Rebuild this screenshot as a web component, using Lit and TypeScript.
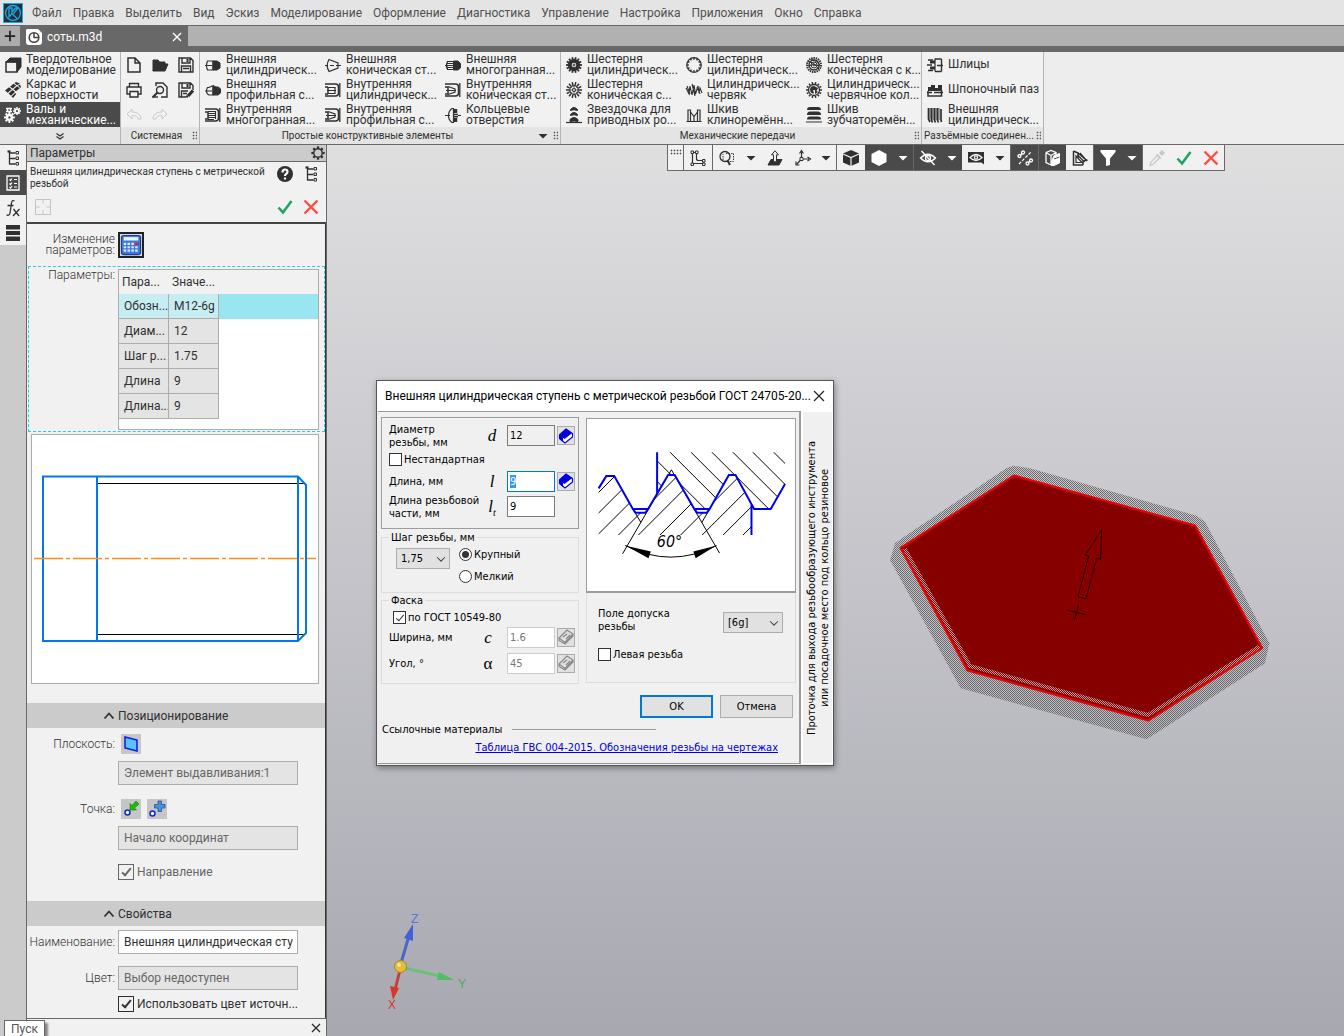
import { LitElement, html, css, svg, nothing, type TemplateResult } from "lit";
import { customElement } from "lit/decorators.js";
import { classMap } from "lit/directives/class-map.js";

const base = css`
  *,
  *::before,
  *::after {
    box-sizing: border-box;
  }
  :host {
    --ink: #303030;
    --dark: #4a4a4a;
    --line: #686868;
    --soft: #f1f1f1;
    --bar: #e4e4e4;
    --mid: #cbcbcb;
    font-family: Roboto, "Noto Sans", sans-serif;
    font-size: 12px;
    color: var(--ink);
  }
  button,
  input,
  select {
    font: inherit;
    color: inherit;
    margin: 0;
    padding: 0;
    border: 0;
    border-radius: 0;
    background: none;
  }
  svg {
    display: block;
    flex: none;
  }
`;

/* Line icons on a 16 × 16 grid; "currentColor" follows the button that holds them. */
const teeth = (r1: number, r2: number, n: number, w: number) =>
  Array.from({ length: n }, (_, i) => {
    const a = (i * 2 * Math.PI) / n;
    return svg`<path stroke-width=${w} d="M${8 + r1 * Math.cos(a)} ${8 + r1 * Math.sin(a)}L${8 + r2 * Math.cos(a)} ${8 + r2 * Math.sin(a)}"/>`;
  });

const bore = svg`<path stroke-width="1.500" d="M0 2h10.500q3 0 3 3v6q0 3-3 3H0M3 5v7M3 5H0M3 12H0"/><path stroke-width="1.300" d="M14.800 1v14"/>`;

const glyphs: Record<string, TemplateResult> = {
  solid: svg`<path fill="currentColor" d="M5 1h11v9l-4 5V5H1z"/><rect x="1" y="5" width="11" height="10" fill="none" stroke-width="1.500"/>`,
  frame: svg`<path fill="currentColor" stroke="none" d="M0 8.500l4-3.200 2.700 2-4 3.400zM5 4.700l3.500-3 2.700 1.900-3.500 3zM9.500 1L11 0l4 1.500-3 1.800zM3.500 11.500l4-3.500 2.500 2-4 3.700zM8.500 7.300l3.600-3 2.600 2L11 9.200zM13 3.800l2-1.300 1 2.500-.7 1zM6.500 14.500l3.700-3.500 1 1L8 16z"/>`,
  shafts: svg`<g transform="translate(-1 5) scale(.68)"><circle cx="8" cy="8" r="3.500" stroke-width="3.500"/>${teeth(5, 8, 8, 3)}</g><g transform="translate(8 0) scale(.5)"><circle cx="8" cy="8" r="4" stroke-width="3.500"/>${teeth(5, 8, 8, 3)}</g><path stroke-width="1.300" d="M2.500 1.500h3v3h-3zM1 1.500h6M1 4.500h6"/>`,
  fileNew: svg`<path stroke-width="1.500" d="M2 1h7l5 5v9H2zM9 1v5h5"/>`,
  fileOpen: svg`<path fill="currentColor" d="M1 14V3h5l1.500 2H13v2H4z"/><path fill="currentColor" d="M4 7h12l-3 7H1z"/>`,
  save: svg`<path stroke-width="1.400" d="M1 1h11.500L15 3.500V15H1zM4 1v5h8V1M3.500 15v-6h9v6M5 11.500h6"/><path stroke-width="2" d="M9.500 2v3"/>`,
  print: svg`<path stroke-width="1.400" d="M3.500 5V1.500h9V5M3.500 12H1V5h14v7h-2.500M4 9.500h8V15H4z"/>`,
  preview: svg`<path stroke-width="1.400" d="M4 4V1h7l4 4v10H9"/><circle cx="8" cy="8" r="3.500" stroke-width="1.400"/><path stroke-width="2" d="M5.500 10.500L1 15"/><path stroke-width="1.400" d="M0 15h6"/>`,
  saveAs: svg`<path stroke-width="1.400" d="M8 15H1V1h11.500L15 3.500V8M4 1v5h8V1M3.500 15v-6H10M5 11.500h4"/><path stroke-width="3.200" d="M15 8.500L10 14"/><path stroke-width="2" d="M9.500 2v3M8.500 15.500l1-2"/>`,
  undo: svg`<path d="M1 7l5-5v3c6 0 9 3 9 7h-3c0-2-2-3.500-6-3.500V12z"/>`,
  redo: svg`<path d="M15 7l-5-5v3c-6 0-9 3-9 7h3c0-2 2-3.500 6-3.500V12z"/>`,
  extCyl: svg`<path stroke-width="1.200" d="M0 8.500h7M2.500 4H8v9H2.500Q.500 8.500 2.500 4z"/><path fill="currentColor" d="M8 4h4l3 2v5l-3 2H8z"/>`,
  extProf: svg`<path stroke-width="1.200" d="M0 9h7M2.500 5.500H4L7 4h1v9H4l-1.500-1Q.500 9 2.500 5.500z"/><path fill="currentColor" d="M8 3.500l3 1.500h2.500l2 2v4L13 13H8z"/>`,
  inner: svg`${bore}<path stroke-width="1.200" d="M3 5.500h7v6H3M2 8.500h9"/>`,
  innerCone: svg`${bore}<path stroke-width="1.200" d="M3 4.500l7 2.500v3l-7 2.500M1 8.500h10"/>`,
  innerPoly: svg`${bore}<path stroke-width="1.100" d="M3 4.500h7M3 6.500h7M3 8.500h8M3 10.500h7M3 12.500h6M10.500 4v8"/>`,
  cone: svg`<path stroke-width="1.200" d="M4 2.500L13 6v5l-9 3.500q-3.500-6 0-12zM0 8.500h3M5 8.500h4M11 8.500h5"/>`,
  multi: svg`<path stroke-width="1.200" d="M0 8.500h8M2 4.500h6M1.500 10.500h7M1.500 6.500h7M2 12.500h6M2.500 4.500q-2 4 0 8"/><path fill="currentColor" d="M8.500 4h4.500l2.500 2.500v4.500L13 13H8.500z"/>`,
  ring: svg`<path stroke-width="1.200" d="M0 8.500h5M13 8.500h3M8.500 1.500H7Q3.500 4 3.500 8.500T7 15.500h1.500z"/><path stroke-width="3.400" d="M10.500 2v4M10.500 11V15"/><path stroke-width="1.600" d="M9 7.500h4M9 9.800h4"/>`,
  gearFull: svg`<circle cx="8" cy="8" r="4.200" stroke-width="3.800"/>${teeth(5, 8, 14, 1.8)}<circle cx="8" cy="8" r="1"/>`,
  gearCone: svg`<circle cx="8" cy="8" r="4.300" stroke-width="1.300"/>${teeth(5, 8, 14, 1.5)}<circle cx="8" cy="8" r="1.500"/>${teeth(2, 4, 8, 0.7)}`,
  sprocket: svg`<path fill="currentColor" d="M4.500 2.500q3.500-4 7 0v1q-3.500-1.500-7 0zM4.500 7.500q3.500-4 7 0v1q-3.500-1.500-7 0zM4 12.500q4-4 8 0v2q-4-1-8 0z"/><path d="M0 15.500h16" stroke-width="1.200"/>`,
  gearRing: svg`<circle cx="8" cy="8" r="7.300" stroke-width="1.200"/>${teeth(5.2, 7, 12, 1.5)}`,
  worm: svg`<path stroke-width="1.100" d="M0 6l3 6L4 4l2 9L8 3l1.500 9L12 4l1 7 1-5 2 5M1 4l3 8M6 2l3 12M11 5l3 7"/>`,
  pulleyV: svg`<path stroke-width="1.200" d="M2 14V3h2.500v11M4.500 5l3.500 4.500L11.500 5M11.500 14V3H14v11M0.500 14.500h15M8 9.500v5"/>`,
  bevel: svg`<circle cx="8" cy="8" r="7" stroke-dasharray="1.500 .8" stroke-width="2"/><circle cx="8" cy="8" r="5" stroke-width="1.300"/><circle cx="8" cy="8" r="3"/><circle cx="8" cy="8" r="1"/><path d="M2 4q6 1 11 8M2 9q5-3 12 0M5 2q6 2 9 6"/>`,
  wormWheel: svg`<circle cx="8" cy="8" r="5.500" stroke-width="1.300"/>${teeth(6, 8, 14, 1.5)}<path fill="currentColor" stroke="none" d="M4 8a4 4 0 0 1 4-4l4 2-1.500 3 1.500 1-3 2V8H7l1 3.500A4 4 0 0 1 4 8z"/>`,
  pulleyT: svg`<path fill="currentColor" stroke="none" d="M1 3q0-3 3-3h8q3 0 3 3zM1 8q0-3.500 3-3.500h8q3 0 3 3.500zM1 12.500Q1 9.500 4 9.500h8q3 0 3 3z"/><path d="M0 15h16"/>`,
  spline: svg`<path stroke-width="1.400" d="M1 3h5M0 8h5M1 13.500h5M14.500 2v12.500M8 2h6.500M8 14.500h6.500M10 8.500h6"/><path stroke-width="3" d="M3 5h5M3 11h5"/><path stroke-width="1.200" d="M8 1.500v13"/>`,
  key: svg`<path fill="currentColor" stroke="none" d="M1 5h3V3h4v3h3V3h4v6H1z"/><path stroke-width="1.500" d="M1 9v5h13.500V8M0 10.500h5M7 10.500h9"/>`,
  thread: svg`<path stroke-width="1.700" d="M1.500 1v11l1.500 3M4.500 1v12l1 2.500M7.500 1v12l1 2.500M10.500 1v12l1 2.500M14 2v11l.500 2"/><path stroke-width=".8" d="M3 1v11M6 1v12M9 1v12M12 1v12"/>`,
  tree: svg`<path stroke-width="1.300" d="M4.500 1.500v13M4.500 3h6M4.500 8.500h6M4.500 14h6"/><path stroke-width="2.200" d="M2.500 1.500h3"/><path d="M11 1.500h2.500v2.500H11zM11 7h2.500v2.500H11zM11 12.500h2.500V15H11z"/>`,
  props: svg`<path stroke-width="1.300" d="M2 1h12v14H2z"/><path stroke-width="1.200" d="M4.500 4.500l1 1 1.500-2M4.500 8.500l1 1 1.500-2M4.500 12l1 1 1.500-2M9 4.500h3M9 8.500h3M9 12h3"/>`,
  rows: svg`<path fill="currentColor" stroke="none" d="M1 0h14v4.500H1zM1 6h14v4H1zM1 11.500h14V16H1z"/>`,
  gear: svg`<circle cx="8" cy="8" r="4.800" stroke-width="1.600"/>${teeth(5, 7.6, 8, 2.6)}`,
  help: svg`<circle cx="8" cy="8" r="8" fill="currentColor" stroke="none"/><path stroke="#fff" stroke-width="2.200" d="M5.500 6.500q0-3 2.500-3t2.500 2.300q0 1.200-1.500 2.200-1 .8-1 2M8 11.500V13.500"/>`,
  focus: svg`<path d="M.500 .500h15v15H.500zM.500 8h4M11.500 8h4M8 .500v4M8 11.500v4"/>`,
  check: svg`<path stroke="#1fa463" stroke-width="2.600" d="M1.500 8.500L6 13.500 14.500 2"/>`,
  cross: svg`<path stroke="#ff4b45" stroke-width="2.400" d="M1.500 1.500l13 13M14.500 1.500l-13 13"/>`,
  thin: svg`<path stroke-width="1.400" d="M4 4l8 8M12 4l-8 8"/>`,
  plus: svg`<path stroke-width="2" d="M8 2v12M2 8h12"/>`,
  chevUp: svg`<path stroke-width="1.800" d="M3.500 10.500L8 5.500l4.500 5"/>`,
  chevDown: svg`<path stroke-width="1.200" d="M3.500 6L8 10.500 12.500 6"/>`,
  chev2: svg`<path stroke-width="1.200" d="M4.500 5.500L8 8l3.500-2.500M4.500 8.500L8 11l3.500-2.500"/>`,
  tri: svg`<path fill="currentColor" stroke="none" d="M3.500 6h9L8 10.500z"/>`,
  sketch: svg`<path d="M2.500 2.500h4v6q0 2 2 2h5v3h-11z" stroke-width="1.200"/><path fill="#f1f1f1" d="M1 1h2.500v2.500H1zM5.500 1H8v2.500H5.500zM12.500 9.500H15V12h-2.500zM12.500 13H15v2.500h-2.500zM1 13h2.500v2.500H1z"/>`,
  zoom: svg`<circle cx="6" cy="6.500" r="5" stroke-width="1.300"/><path stroke-width="2" d="M8.500 10.500L11 15"/><path stroke-dasharray="1.500 1" d="M7 3.500h7.500v8H10M4 10V4"/>`,
  normal: svg`<path fill="currentColor" d="M4 9.500h11L12 15H1z"/><path fill="#f1f1f1" d="M8 .800l3.500 4H9.500v7h-3v-7h-2z"/>`,
  axes: svg`<path stroke-width="1.200" d="M6.500 9V2M6.500 9H14M6.500 9L2 14M4.500 3.500l2-3 2 3M12.500 7l3 2-3 2M1 11.500v3.500h3.500"/><path fill="#f1f1f1" d="M5 7.500h3v3H5z"/>`,
  cube: svg`<path fill="currentColor" stroke="none" d="M8 0l8 3.500v9L8 16l-8-3.500v-9z"/><path stroke="#f1f1f1" stroke-width="1.200" d="M0 4l8 3.500L16 4M8 7.500V16"/>`,
  hexa: svg`<path fill="currentColor" stroke="none" d="M8 0l7.500 4v8L8 16 .500 12V4z"/>`,
  eyeOff: svg`<path stroke-width="1.400" d="M.500 8Q8 .500 15.500 8 8 15.500.500 8zM1.500 1l13 14"/><circle cx="8" cy="8" r="2.500" stroke-width="1.300"/>`,
  eyeBox: svg`<path fill="currentColor" stroke="none" d="M0 2h16V14.500l-2.500-2H0z"/><path stroke="#f1f1f1" stroke-width="1.300" d="M2 7.500Q8 1.500 14 7.500 8 13.500 2 7.500z"/><circle cx="8" cy="7.500" r="1.600" stroke="#f1f1f1" stroke-width="1.300"/>`,
  nodes: svg`<path stroke-width="1.200" stroke-dasharray="3 1.500" d="M2 14L14 2"/><path stroke-width="1.200" d="M3 5.500l2-2M11 13l2-2"/><circle cx="2.500" cy="6" r="1.500" stroke-width="1.300"/><circle cx="6" cy="2.500" r="1.500" stroke-width="1.300"/><circle cx="10.500" cy="13.500" r="1.500" stroke-width="1.300"/><circle cx="14" cy="10.500" r="1.500" stroke-width="1.300"/>`,
  faces: svg`<path d="M1 2.500L6 .500l5 2v6M1 2.500v10l5 2.500M1 2.500l5 3v9M6 5.500l5-3" stroke-width="1.300"/><path fill="currentColor" d="M9 5.500l5.500-2V13L9 15.500H6.500V12z"/><path stroke="#4a4a4a" d="M9 9l5.500-2"/>`,
  cutPart: svg`<path stroke-width="1.500" d="M1.500 1v14H11M1.500 1L6 3v5M11 15V11l4.500-1"/><path stroke-width="1.200" d="M4 6v6.500h6L4 6zM6 3l8 7M5.500 5l7 7M8 3l7 8"/>`,
  filter: svg`<path fill="currentColor" stroke="none" d="M.500 0h15v2L10 8.500V15l-4 1V8.500L.500 2z"/>`,
  pipette: svg`<path fill="currentColor" stroke="none" d="M10 3l3-3 3 3-3 3zM8 3.500l4.500 4.500-1.500 1-4-4z"/><path stroke-width="1.200" d="M8 6l-6 6-1 3.500L4.500 14l6-6"/>`,
  bookOn: svg`<path fill="#fff" stroke="#0000d0" stroke-width="1.200" d="M1.500 7L8 1l6.500 4.500V9L7 15l-5.500-4.500z"/><path fill="#0000e0" stroke="none" d="M1 7l7-6 6 4.200L6.500 11zM1 7l4 3v4L1 10.500z"/>`,
  bookOff: svg`<path fill="#dcdcdc" stroke="#8a8a8a" stroke-width="1.200" d="M1 9L9 1l6 4-8 8.500zM1 9v2.500l6 3.500 8-8V5M5 8l4-3M8 10l4-4"/>`,
  calc: svg`<rect x="-.500" y="-.500" width="17" height="17" rx="2" fill="#3f78d8" stroke="#1a3f9c"/><rect x="1.500" y="1" width="13" height="3" fill="#eaf4ff" stroke="none"/><path stroke="#dce9ff" stroke-width="1.800" stroke-dasharray="2.200 1.200" d="M1.500 7h10M1.500 10h13M1.500 13h13"/><path stroke="#e02020" stroke-width="1.800" d="M11.500 7h3.500"/>`,
  plane: svg`<path fill="#5cc3fa" stroke="#0a18e8" stroke-width="1.500" d="M2 1l12 3v11L2 12z"/>`,
  pointIn: svg`<circle cx="4.500" cy="11.500" r="2.500" fill="#fdf8a0" stroke="#0a28e0" stroke-width="1.500"/><path fill="#23b80f" stroke="#158000" stroke-width=".6" d="M7 9V2.500l2 2L13 0l3 3-4.500 4 2 2z"/>`,
  pointAdd: svg`<circle cx="3.500" cy="12.500" r="2.500" fill="#fdf8a0" stroke="#0a28e0" stroke-width="1.500"/><path fill="#4f8fd8" stroke="#1f55a0" stroke-width=".8" d="M9 0h3.500v3.500H16V7h-3.500v3.500H9V7H5.500V3.500H9z"/>`,
};

const icon = (name: string, size = 16) =>
  svg`<svg width=${size} height=${size} viewBox="0 0 16 16" fill="none" stroke="currentColor" aria-hidden="true" overflow="visible">${glyphs[name]}</svg>`;

type Item = [string, string, string?];
interface Group {
  title: string;
  more?: boolean;
  columns: Item[][];
}

const groups: Group[] = [
  {
    title: "Простые конструктивные элементы",
    more: true,
    columns: [
      [["extCyl", "Внешняя", "цилиндрическ..."], ["extProf", "Внешняя", "профильная с..."], ["innerPoly", "Внутренняя", "многогранная..."]],
      [["cone", "Внешняя", "коническая ст..."], ["inner", "Внутренняя", "цилиндрическ..."], ["innerCone", "Внутренняя", "профильная с..."]],
      [["multi", "Внешняя", "многогранная..."], ["innerCone", "Внутренняя", "коническая ст..."], ["ring", "Кольцевые", "отверстия"]],
    ],
  },
  {
    title: "Механические передачи",
    columns: [
      [["gearFull", "Шестерня", "цилиндрическ..."], ["gearCone", "Шестерня", "коническая с..."], ["sprocket", "Звездочка для", "приводных ро..."]],
      [["gearRing", "Шестерня", "цилиндрическ..."], ["worm", "Цилиндрическ...", "червяк"], ["pulleyV", "Шкив", "клиноремённ..."]],
      [["bevel", "Шестерня", "коническая с к..."], ["wormWheel", "Цилиндрическ...", "червячное кол..."], ["pulleyT", "Шкив", "зубчаторемён..."]],
    ],
  },
  {
    title: "Разъёмные соединен...",
    columns: [[["spline", "Шлицы"], ["key", "Шпоночный паз"], ["thread", "Внешняя", "цилиндрическ..."]]],
  },
];

@customElement("cad-ribbon")
export class CadRibbon extends LitElement {
  static styles = [
    base,
    css`
      :host {
        display: block;
      }
      .menu {
        display: flex;
        align-items: center;
        gap: 11px;
        height: 26px;
        padding-left: 3px;
        background: var(--bar);
        border-bottom: 1px solid var(--line);
        color: #505050;
      }
      .logo {
        margin-right: -2px;
      }
      .tabs {
        display: flex;
        height: 26px;
        background: var(--line);
        border-bottom: 6px solid var(--line);
      }
      .add {
        display: grid;
        place-items: center;
        width: 20px;
        background: #acacac;
        color: #222;
      }
      .tab {
        display: flex;
        align-items: center;
        gap: 5px;
        width: 168px;
        padding: 2px 3px 0 6px;
        color: #fff;
      }
      .tab span {
        flex: 1;
      }
      .rest {
        flex: 1;
        background: #b1b1b1;
      }
      .ribbon {
        display: flex;
        height: 93px;
        background: #ededed;
        border-bottom: 1px solid var(--line);
      }
      .group {
        display: flex;
        flex-direction: column;
        border-right: 1px solid #b4b4b4;
        background: var(--soft);
      }
      .cols {
        display: flex;
        height: 75px;
      }
      .col {
        display: flex;
        flex-direction: column;
        width: 120px;
      }
      .item {
        display: flex;
        align-items: center;
        gap: 5px;
        height: 25px;
        padding-left: 5px;
        line-height: 11px;
        text-align: left;
        white-space: nowrap;
      }
      .item.on {
        background: var(--dark);
        color: #fff;
      }
      .foot {
        display: flex;
        align-items: center;
        gap: 2px;
        flex: 1;
        padding: 0 2px;
        background: var(--bar);
        font-size: 10px;
        white-space: nowrap;
      }
      .foot span {
        flex: 1;
        text-align: center;
      }
      .foot .chev {
        flex: 1;
        display: grid;
        place-items: center;
      }
      .grip {
        width: 5px;
        height: 9px;
        background: radial-gradient(circle, #555 40%, transparent 50%) 0 0 / 3px 3px;
      }
      .sys {
        display: grid;
        grid-template-columns: repeat(3, 26px);
        grid-auto-rows: 25px;
        height: 75px;
      }
      .sys button {
        display: grid;
        place-items: center;
      }
      .sys button:disabled {
        color: #c8c8c8;
      }
    `,
  ];

  render() {
    const menu = ["Файл", "Правка", "Выделить", "Вид", "Эскиз", "Моделирование", "Оформление", "Диагностика", "Управление", "Настройка", "Приложения", "Окно", "Справка"];
    const modes: Item[] = [["solid", "Твердотельное", "моделирование"], ["frame", "Каркас и", "поверхности"], ["shafts", "Валы и", "механические..."]];
    const sys = ["fileNew", "fileOpen", "save", "print", "preview", "saveAs", "undo", "redo"];
    return html`
      <nav class="menu">
        <svg class="logo" width="20" height="20" viewBox="0 0 20 20" fill="none" stroke="#19a9e5">
          <rect width="20" height="20" fill="#26303a" stroke="none" />
          <rect x=".5" y=".5" width="19" height="19" />
          <circle cx="10" cy="10" r="7.500" stroke-width="1.300" />
          <path stroke-width="1.300" d="M6 5v9l3-3.500 5 5M6 5h3v4l3.500-4H15l-4.500 5.500" />
        </svg>
        ${menu.map((m) => html`<button>${m}</button>`)}
      </nav>
      <div class="tabs">
        <button class="add" aria-label="Новая вкладка">${icon("plus", 14)}</button>
        <div class="tab">
          <svg width="16" height="16" viewBox="0 0 16 16">
            <path fill="#fff" d="M1 0h11l4 4v9q0 3-3 3H3q-3 0-3-3V1z" />
            <circle cx="8" cy="8.500" r="4.800" fill="none" stroke="#444" stroke-width="1.600" />
            <path stroke="#444" stroke-width="1.500" fill="none" d="M8 4v4.500h4.500" />
          </svg>
          <span>соты.m3d</span>
          <button aria-label="Закрыть вкладку">${icon("thin")}</button>
        </div>
        <div class="rest"></div>
      </div>
      <div class="ribbon">
        <section class="group">
          <div class="col">${modes.map((m, i) => this.item(m, i === 2))}</div>
          <div class="foot"><button class="chev" aria-label="Ещё">${icon("chev2")}</button></div>
        </section>
        <section class="group">
          <div class="sys">
            ${sys.map((s, i) => html`<button aria-label=${s} ?disabled=${i > 5}>${icon(s)}</button>`)}
          </div>
          <div class="foot"><span>Системная</span><i class="grip"></i></div>
        </section>
        ${groups.map(
          (g) => html`<section class="group">
            <div class="cols">${g.columns.map((c) => html`<div class="col">${c.map((i) => this.item(i))}</div>`)}</div>
            <div class="foot"><span>${g.title}</span>${g.more ? icon("tri") : nothing}<i class="grip"></i></div>
          </section>`,
        )}
      </div>
    `;
  }

  private item([name, a, b]: Item, on = false) {
    return html`<button class=${classMap({ item: true, on })}>${icon(name)}<span>${a}${b ? html`<br />${b}` : nothing}</span></button>`;
  }
}

@customElement("cad-parameters")
export class CadParameters extends LitElement {
  static styles = [
    base,
    css`
      :host {
        display: flex;
        background: var(--mid);
      }
      .side {
        display: flex;
        flex-direction: column;
        width: 26px;
      }
      .side button {
        display: grid;
        place-items: center;
        height: 25px;
        background: var(--soft);
      }
      .side .on {
        background: var(--dark);
        color: #fff;
      }
      .panel {
        flex: 1;
        display: flex;
        flex-direction: column;
        min-width: 0;
        background: var(--soft);
        border: solid var(--line);
        border-width: 0 1px;
      }
      .title {
        display: flex;
        align-items: center;
        justify-content: space-between;
        height: 17px;
        padding: 0 1px 0 3px;
        background: var(--mid);
        border-bottom: 1px solid var(--line);
      }
      .head {
        display: grid;
        grid-template-columns: 1fr 16px 16px;
        column-gap: 10px;
        row-gap: 9px;
        align-items: start;
        align-content: start;
        height: 62px;
        padding: 4px 7px 0 3px;
        border-bottom: 2px solid #444;
      }
      .head p {
        margin: 0;
        font-size: 10px;
        line-height: 12px;
      }
      .head button {
        height: 16px;
      }
      .head .focus {
        padding-left: 5px;
        color: #c4c4c4;
      }
      .form {
        flex: 1;
        display: flex;
        flex-direction: column;
        border-right: 1px solid #333;
      }
      .row {
        display: grid;
        grid-template-columns: 88px 1fr;
        column-gap: 3px;
      }
      .row > label,
      .row > .lbl {
        text-align: right;
        font-weight: 300;
        color: #333;
      }
      .edit {
        padding-top: 8px;
        height: 42px;
      }
      .edit .lbl {
        line-height: 11px;
        padding-top: 2px;
      }
      .calc {
        display: grid;
        place-items: center;
        width: 26px;
        height: 26px;
        border: 2px solid #222;
        background: #d8d8d8;
      }
      .params {
        height: 166px;
        margin-left: 1px;
        padding-top: 2px;
        border: 1px dashed #27cde0;
        grid-template-columns: 86px 1fr;
      }
      .params .lbl {
        line-height: 12px;
      }
      .grid {
        width: 201px;
        height: 161px;
        border: 1px solid #acacac;
        background: #fff;
      }
      table {
        width: 199px;
        table-layout: fixed;
        border-collapse: separate;
        border-spacing: 0;
      }
      th,
      td {
        height: 25px;
        padding: 0 0 0 5px;
        text-align: left;
        font-weight: 400;
        white-space: nowrap;
        overflow: hidden;
      }
      th {
        height: 24px;
        padding-left: 3px;
        background: var(--soft);
      }
      td {
        background: #e4e4e4;
        border: solid #acacac;
        border-width: 0 1px 1px 0;
      }
      td.void {
        background: transparent;
        border: 0;
      }
      .sel td {
        background: #c6edf1;
      }
      .sel td.void {
        background: #99e6f1;
      }
      .preview {
        margin: 2px 6px 0 4px;
        border: 1px solid #acacac;
        background: #fff;
      }
      .preview svg {
        width: 100%;
      }
      .section {
        display: flex;
        align-items: center;
        gap: 1px;
        height: 25px;
        padding-left: 74px;
        background: var(--mid);
        text-align: left;
      }
      .pos {
        margin-top: 19px;
      }
      .prop {
        margin-top: 21px;
      }
      .tools {
        display: flex;
        gap: 6px;
        padding-left: 3px;
      }
      .tools button {
        display: grid;
        place-items: center;
        width: 20px;
        height: 20px;
        background: #c6c6c6;
      }
      .body {
        display: grid;
        padding-top: 6px;
        row-gap: 7px;
      }
      .body .row {
        align-items: center;
        grid-template-columns: 88px 180px;
      }
      .point {
        margin-top: 7px;
      }
      .text {
        width: 180px;
        height: 24px;
        padding: 0 4px 0 5px;
        border: 1px solid #acacac;
        background: #fff;
      }
      .text:disabled {
        background: #e4e4e4;
        color: #666;
      }
      .tick {
        display: flex;
        align-items: center;
        gap: 3px;
        padding-left: 91px;
        margin-top: 7px;
        white-space: nowrap;
      }
      .tick.off {
        color: #666;
      }
      .tick input {
        appearance: none;
        display: grid;
        place-items: center;
        width: 16px;
        height: 16px;
        border: 1px solid currentColor;
      }
      .tick input:checked::before {
        content: "";
        width: 5px;
        height: 10px;
        margin-top: -2px;
        border: solid currentColor;
        border-width: 0 2px 2px 0;
        transform: rotate(40deg);
      }
      .second {
        padding-top: 4px;
        row-gap: 12px;
      }
      .second .tick {
        margin-top: -6px;
      }
      .bottom {
        display: flex;
        justify-content: flex-end;
        align-items: center;
        height: 18px;
        padding-right: 2px;
        border-top: 1px solid var(--line);
      }
      .hint {
        position: absolute;
        left: 4px;
        bottom: 0;
        height: 16px;
        padding: 0 6px;
        line-height: 16px;
        border: 1px solid #666;
        border-bottom: 0;
        background: #fff;
        color: #555;
        box-shadow: 3px 3px 2px #888;
      }
    `,
  ];

  render() {
    const rows = [["Обозн...", "М12-6g"], ["Диам...", "12"], ["Шаг р...", "1.75"], ["Длина", "9"], ["Длина...", "9"]];
    return html`
      <div class="side">
        <button aria-label="Дерево">${icon("tree")}</button>
        <button class="on" aria-label="Параметры">${icon("props")}</button>
        <button aria-label="Переменные">
          <svg width="16" height="18" viewBox="0 0 16 18" fill="none" stroke="currentColor" stroke-width="1.300">
            <path d="M9.500 2Q7 .500 6.500 4L5 14q-.500 3-3.500 2M2.500 6.500h6M8.500 10l5.500 7M14.500 10l-6.500 7" />
          </svg>
        </button>
        <button aria-label="Слои">${icon("rows")}</button>
      </div>
      <aside class="panel">
        <div class="title"><span>Параметры</span><button aria-label="Настройка">${icon("gear", 14)}</button></div>
        <div class="head">
          <p>Внешняя цилиндрическая ступень с метрической резьбой</p>
          <button aria-label="Помощь">${icon("help")}</button>
          <button aria-label="Дерево">${icon("tree")}</button>
          <button class="focus" aria-label="Указать">${icon("focus")}</button>
          <button aria-label="Создать">${icon("check")}</button>
          <button aria-label="Отменить">${icon("cross")}</button>
        </div>
        <div class="form">
          <div class="row edit">
            <div class="lbl">Изменение параметров:</div>
            <button class="calc" aria-label="Изменение параметров">${icon("calc", 18)}</button>
          </div>
          <div class="row params">
            <div class="lbl">Параметры:</div>
            <div class="grid">
              <table>
                <colgroup>
                  <col width="50" />
                  <col width="50" />
                  <col />
                </colgroup>
                <tr>
                  <th>Пара...</th>
                  <th>Значе...</th>
                  <th></th>
                </tr>
                ${rows.map(
                  ([k, v], i) => html`<tr class=${classMap({ sel: i === 0 })}>
                    <td>${k}</td>
                    <td>${v}</td>
                    <td class="void"></td>
                  </tr>`,
                )}
              </table>
            </div>
          </div>
          <div class="preview">
            <svg viewBox="32 435 286 248" fill="none" stroke="#0078ec" stroke-width="2">
              <path stroke="#000" stroke-width="1" d="M97 483.500H305M97 634.500H305" />
              <path d="M43 476.500H298L306 485V633L298 641H43zM97 476V641M298 476V641" />
              <path stroke="#ff8c1a" stroke-width="1.300" stroke-dasharray="29 3 4 3" d="M34 558.500H316" />
            </svg>
          </div>
          <button class="section pos">${icon("chevUp")}Позиционирование</button>
          <div class="body">
            <div class="row">
              <label for="plane">Плоскость:</label>
              <div class="tools"><button aria-label="Плоскость">${icon("plane")}</button></div>
            </div>
            <div class="row"><i></i><input id="plane" class="text" disabled value="Элемент выдавливания:1" /></div>
            <div class="row point">
              <label for="point">Точка:</label>
              <div class="tools">
                <button aria-label="Указать точку">${icon("pointIn")}</button>
                <button aria-label="Добавить точку">${icon("pointAdd")}</button>
              </div>
            </div>
            <div class="row"><i></i><input id="point" class="text" disabled value="Начало координат" /></div>
            <label class="tick off"><input type="checkbox" checked disabled />Направление</label>
          </div>
          <button class="section prop">${icon("chevUp")}Свойства</button>
          <div class="body second">
            <div class="row">
              <label for="name">Наименование:</label>
              <input id="name" class="text" value="Внешняя цилиндрическая ступень" />
            </div>
            <div class="row">
              <label for="color">Цвет:</label>
              <input id="color" class="text" disabled value="Выбор недоступен" />
            </div>
            <label class="tick"><input type="checkbox" checked />Использовать цвет источн...</label>
          </div>
        </div>
        <div class="bottom"><button aria-label="Закрыть">${icon("thin")}</button></div>
      </aside>
      <div class="hint" role="tooltip">Пуск</div>
    `;
  }
}

@customElement("thread-dialog")
export class ThreadDialog extends LitElement {
  static styles = [
    base,
    css`
      :host {
        display: block;
        width: 458px;
        border: 1px solid #555;
        background: #f0f0f0;
        color: #000;
        font-family: "DejaVu Sans Condensed", "Noto Sans", sans-serif;
        font-size: 11px;
        line-height: 13px;
        box-shadow: 1px 2px 6px rgba(0, 0, 0, 0.4);
      }
      .title {
        display: flex;
        align-items: center;
        justify-content: space-between;
        height: 30px;
        padding: 0 7px 0 8px;
        background: #fff;
        font-family: Roboto, "Noto Sans", sans-serif;
        font-size: 12px;
        white-space: nowrap;
      }
      .wrap {
        display: flex;
        padding: 0 0 1px 1px;
      }
      .main {
        flex: 1;
        display: grid;
        grid-template-columns: 198px 1fr;
        column-gap: 7px;
        padding: 5px 3px 9px 3px;
        border: solid #9a9a9a;
        border-width: 1px 2px 1px 0;
      }
      .side {
        display: grid;
        place-items: center;
        width: 32px;
        border: 1px solid #fff;
        border-left-width: 2px;
        background: #f0f0f0;
      }
      .side span {
        writing-mode: vertical-rl;
        transform: rotate(180deg);
        text-align: center;
        white-space: nowrap;
      }
      .left {
        display: flex;
        flex-direction: column;
      }
      .box {
        display: flex;
        flex-direction: column;
        height: 112px;
        padding: 4px 2px 0 7px;
        border: 1px solid #9c9c9c;
      }
      .box > .opt {
        margin: 4px 0 3px;
      }
      .line {
        display: grid;
        grid-template-columns: 92px 24px 48px 18px;
        column-gap: 1px;
        align-items: center;
        height: 27px;
      }
      .line.short {
        height: 24px;
      }
      .line b {
        font: italic 17px/17px "Liberation Serif", serif;
        padding-right: 4px;
        text-align: center;
      }
      .line sub {
        font-size: 10px;
        line-height: 0;
      }
      .line button {
        display: grid;
        place-items: center;
        width: 18px;
        height: 19px;
        margin-left: 1px;
        border: 1px solid #acacac;
        background: #e1e1e1;
      }
      .num {
        width: 48px;
        height: 21px;
        padding: 0 2px;
        border: 1px solid #7a7a7a;
        background: #fff;
        outline: 0;
      }
      .num[readonly] {
        background: #f0f0f0;
      }
      .num:disabled {
        border-color: #ccc;
        color: #777;
      }
      .active {
        border-color: #0078d7;
      }
      .active::selection {
        background: #3399ff;
        color: #fff;
      }
      .opt {
        display: flex;
        align-items: center;
        gap: 2px;
      }
      .opt input {
        appearance: none;
        display: grid;
        place-items: center;
        width: 13px;
        height: 13px;
        border: 1px solid #333;
        background: #fff;
      }
      .opt input[type="radio"] {
        border-radius: 50%;
      }
      .opt input[type="radio"]:checked::before {
        content: "";
        width: 7px;
        height: 7px;
        border-radius: 50%;
        background: #333;
      }
      .opt input[type="checkbox"]:checked::before {
        content: "";
        width: 4px;
        height: 8px;
        margin-top: -2px;
        border: solid #333;
        border-width: 0 1px 1px 0;
        transform: rotate(40deg);
      }
      fieldset {
        margin: 0;
        padding: 0 2px 0 7px;
        border: 1px solid #dcdcdc;
        min-width: 0;
      }
      legend {
        padding: 0 2px;
      }
      .pitch {
        height: 62px;
        margin-top: 2px;
      }
      .steps {
        display: grid;
        grid-template-columns: 54px 1fr;
        column-gap: 9px;
        padding: 4px 0 0 7px;
      }
      .radios {
        display: grid;
        align-content: start;
        row-gap: 9px;
      }
      .drop {
        position: relative;
        display: block;
      }
      .drop select {
        appearance: none;
        width: 100%;
        height: 21px;
        padding-left: 4px;
        border: 1px solid #acacac;
        background: #e1e1e1;
      }
      .drop svg {
        position: absolute;
        right: 2px;
        top: 4px;
        pointer-events: none;
        color: #444;
      }
      .chamfer {
        height: 90px;
        margin-top: 1px;
      }
      .chamfer .opt {
        padding: 4px 0 0 4px;
      }
      .chamfer .line {
        height: 26px;
      }
      .chamfer .line b {
        padding-right: 12px;
      }
      .chamfer .plain {
        font-style: normal;
      }
      .pic {
        height: 175px;
        margin-top: 1px;
        border: solid #9c9c9c;
        border-width: 1px 1px 2px 1px;
        background: #fff;
      }
      .pic svg {
        width: 100%;
        height: 100%;
      }
      .tol {
        display: grid;
        grid-template-columns: 1fr 60px;
        align-content: start;
        align-items: end;
        row-gap: 15px;
        height: 90px;
        padding: 14px 12px 0 11px;
        border: 1px solid #dcdcdc;
        border-top: 0;
      }
      .foot {
        grid-column: 1 / -1;
        display: grid;
        row-gap: 5px;
        padding-top: 11px;
      }
      .acts {
        display: flex;
        justify-content: flex-end;
        gap: 7px;
        padding-right: 3px;
      }
      .acts button {
        width: 73px;
        height: 23px;
        border: 1px solid #acacac;
        background: #e1e1e1;
      }
      .acts .ok {
        border: 2px solid #0078d7;
      }
      .refs {
        display: flex;
        align-items: center;
        gap: 10px;
        padding-left: 1px;
      }
      .refs i {
        width: 144px;
        height: 1px;
        background: #9c9c9c;
      }
      .link {
        text-align: right;
        padding-right: 18px;
      }
      .link a {
        color: #0000e0;
      }
    `,
  ];

  firstUpdated() {
    const el = this.renderRoot.querySelector<HTMLInputElement>(".active");
    el?.focus({ preventScroll: true });
    el?.select();
  }

  private thread() {
    const low = [410, 472, 535, 598, 658, 723, 785, 850, 913, 973];
    const high = [-29, -91, 36, 99, 162, 225, 285, 348];
    return html`<svg viewBox="20 134 626 518" preserveAspectRatio="none" fill="none" stroke="#000" stroke-width="3">
      <defs>
        <clipPath id="low">
          <path d="M55 343L78 306H102L158 405 166 416H196L204 405 274 287 343 405 351 416H381L389 405 447 303H467L515 390V483H55z" />
        </clipPath>
        <clipPath id="high"><path d="M231 234H616V330L573 405H523L467 303H447L389 405H343L284 303H264L231 360z" /></clipPath>
      </defs>
      <g clip-path="url(#low)">${low.map((c) => svg`<path d="M${c - 500} 500L${c - 280} 280"/>`)}</g>
      <g clip-path="url(#high)">${high.map((c) => svg`<path d="M${c + 220} 220L${c + 420} 420"/>`)}</g>
      <path d="M274 287L127 540M274 287L419 538M158 405L182 445M389 405L366 445M135 515Q272 585 410 515" />
      <path fill="#000" d="M137 516L212 533 205 553zM408 516L340 533 347 553z" stroke="none" />
      <g stroke="#0000f0" stroke-width="6">
        <path d="M55 343L78 306H102L158 405 166 416H196L204 405 264 303H284L343 405 351 416H381L389 405 447 303H467L523 405H573L616 330M156 405H206M342 405H391M231 234V360M515 390V483" />
      </g>
      <text x="230" y="521" fill="#000" stroke="none" font-family="DejaVu Sans Condensed" font-style="italic" font-size="48">60°</text>
    </svg>`;
  }

  render() {
    return html`
      <div class="title"><span>Внешняя цилиндрическая ступень с метрической резьбой ГОСТ 24705-20...</span>
        <button aria-label="Закрыть"><svg width="16" height="16" viewBox="0 0 16 16" stroke="#222" stroke-width="1.200"><path d="M3 3l10 10M13 3L3 13" /></svg></button>
      </div>
      <div class="wrap">
        <form class="main" @submit=${(e: Event) => e.preventDefault()}>
          <div class="left">
            <div class="box">
              <div class="line">
                <label for="d">Диаметр<br />резьбы, мм</label><b>d</b>
                <input id="d" class="num" readonly value="12" />
                <button type="button" aria-label="Справочник диаметров">${icon("bookOn")}</button>
              </div>
              <label class="opt"><input type="checkbox" />Нестандартная</label>
              <div class="line short">
                <label for="l">Длина, мм</label><b>l</b>
                <input id="l" class="num active" value="9" />
                <button type="button" aria-label="Справочник длин">${icon("bookOn")}</button>
              </div>
              <div class="line">
                <label for="lt">Длина резьбовой<br />части, мм</label><b>l<sub>t</sub></b>
                <input id="lt" class="num" value="9" />
              </div>
            </div>
            <fieldset class="pitch">
              <legend>Шаг резьбы, мм</legend>
              <div class="steps">
                <div class="drop"><select aria-label="Шаг резьбы"><option>1,75</option></select>${icon("chevDown", 14)}</div>
                <div class="radios">
                  <label class="opt"><input type="radio" name="step" checked />Крупный</label>
                  <label class="opt"><input type="radio" name="step" />Мелкий</label>
                </div>
              </div>
            </fieldset>
            <fieldset class="chamfer">
              <legend>Фаска</legend>
              <label class="opt"><input type="checkbox" checked />по ГОСТ 10549-80</label>
              <div class="line">
                <label for="c">Ширина, мм</label><b>c</b>
                <input id="c" class="num" disabled value="1.6" />
                <button type="button" disabled aria-label="Справочник ширин">${icon("bookOff")}</button>
              </div>
              <div class="line">
                <label for="a">Угол, °</label><b class="plain">α</b>
                <input id="a" class="num" disabled value="45" />
                <button type="button" disabled aria-label="Справочник углов">${icon("bookOff")}</button>
              </div>
            </fieldset>
          </div>
          <div>
            <div class="pic">${this.thread()}</div>
            <div class="tol">
              <label for="tol">Поле допуска<br />резьбы</label>
              <div class="drop"><select id="tol"><option>[6g]</option></select>${icon("chevDown", 14)}</div>
              <label class="opt"><input type="checkbox" />Левая резьба</label>
            </div>
          </div>
          <div class="foot">
            <div class="acts"><button class="ok">OK</button><button type="button">Отмена</button></div>
            <div class="refs">Ссылочные материалы<i></i></div>
            <div class="link"><a href="#">Таблица ГВС 004-2015. Обозначения резьбы на чертежах</a></div>
          </div>
        </form>
        <div class="side"><span>Проточка для выхода резьбообразующего инструмента<br />или посадочное место под кольцо резиновое</span></div>
      </div>
    `;
  }
}

@customElement("cad-viewport")
export class CadViewport extends LitElement {
  static styles = [
    base,
    css`
      :host {
        display: block;
        position: relative;
        overflow: hidden;
        background: linear-gradient(#dfdfe0, #cacacf 37%, #a8a8b1);
      }
      .bar {
        display: flex;
        width: max-content;
        height: 26px;
        margin: 0 119px 0 auto;
        border: solid var(--line);
        border-width: 0 1px 1px;
        background: var(--soft);
      }
      .seg {
        display: flex;
        border-right: 1px solid var(--line);
      }
      .seg:last-child {
        border-right: 0;
      }
      .seg button {
        display: grid;
        place-items: center;
        width: 27px;
      }
      .seg button.wide {
        width: 28px;
      }
      .seg button.arrow {
        width: 20px;
      }
      .seg .on {
        background: var(--dark);
        color: #fff;
      }
      .seg .faint {
        color: #c8c8c8;
      }
      .dots {
        width: 12px;
        height: 6px;
        margin: 4px 1px 0 2px;
        background: radial-gradient(circle, #444 40%, transparent 50%) 0 0 / 3px 3px;
      }
      .model {
        position: absolute;
        left: 553px;
        top: 305px;
      }
      .triad {
        position: absolute;
        left: 53px;
        bottom: 21px;
      }
      thread-dialog {
        position: absolute;
        left: 49px;
        top: 235px;
      }
    `,
  ];

  private segs: [string, string?][][] = [
    [["sketch", "wide"]],
    [["zoom", "wide"], ["tri", "arrow"], ["normal", "wide"], ["axes"], ["tri", "arrow"]],
    [["cube", "wide"], ["hexa", "on wide"], ["tri", "arrow on"]],
    [["eyeOff", "on wide"], ["tri", "arrow on"], ["eyeBox", "wide"], ["tri", "arrow"]],
    [["nodes", "on"]],
    [["faces", "on"], ["cutPart"]],
    [["filter", "on wide"], ["tri", "arrow on"]],
    [["pipette", "faint"], ["check"], ["cross"]],
  ];

  render() {
    return html`
      <div class="bar">
        <div class="seg"><i class="dots"></i></div>
        ${this.segs.map((s) => html`<div class="seg">${s.map(([n, c]) => html`<button class=${c ?? ""} aria-label=${n}>${icon(n)}</button>`)}</div>`)}
      </div>
      <svg class="model" width="400" height="300" viewBox="0 0 1200 900" fill="none">
        <defs>
          <pattern id="mesh" width="6" height="6" patternUnits="userSpaceOnUse"><path fill="#6a6a6c" d="M0 0h3v3H0zM3 3h3v3H3z" /></pattern>
          <pattern id="mesh-in" width="6" height="6" patternUnits="userSpaceOnUse"><path fill="#b4a0a0" d="M0 0h3v3H0zM3 3h3v3H3z" /></pattern>
        </defs>
        <path fill="url(#mesh)" d="M30 330L45 280 70 262 380 54 400 47 450 55 950 197 975 215 1168 580 1155 640 800 868 242 715z" />
        <path fill="#860000" stroke="#e00505" stroke-width="7" stroke-linejoin="round" d="M62 294L402 77 945 227 1146 594 805 811 263 661z" />
        <path stroke="url(#mesh-in)" stroke-width="12" d="M74 296L270 648 804 795 1138 590" />
        <path stroke="#200000" stroke-width="3" d="M665 240L616 315 626 318 594 440M618 446L650 325 662 328 665 240M594 440L618 446M563 481L618 494M596 465L583 511" />
      </svg>
      <svg class="triad" width="90" height="105" viewBox="380 910 90 105" fill="none" font-family="Liberation Sans" font-size="12">
        <path stroke="#4a66c8" stroke-width="3" d="M401 963L409 936" />
        <path fill="#3f62d8" d="M413 924L404 938 413 941z" />
        <path stroke="#6abf7a" stroke-width="3" d="M404 968L440 976" />
        <path fill="#4fbf62" d="M454 980L439 972 437 980z" />
        <path stroke="#c0403a" stroke-width="3" d="M400 970L395 990" />
        <path fill="#d8352c" d="M393 1000L390 986 399 988z" />
        <circle cx="400.500" cy="966.500" r="6" fill="#e2bd3a" stroke="#a98a20" />
        <circle cx="399" cy="965" r="2" fill="#f8e68c" />
        <text x="411" y="923" fill="#4a7ae0">Z</text>
        <text x="458" y="988" fill="#3fb254">Y</text>
        <text x="388" y="1009" fill="#d8352c">X</text>
      </svg>
      <thread-dialog role="dialog"></thread-dialog>
    `;
  }
}

@customElement("app-root")
export class AppRoot extends LitElement {
  static styles = css`
    :host {
      display: flex;
      flex-direction: column;
      min-height: 100vh;
      position: relative;
      overflow: hidden;
    }
    .work {
      flex: 1;
      display: grid;
      grid-template-columns: 327px 1fr;
    }
  `;

  render() {
    return html`
      <cad-ribbon></cad-ribbon>
      <main class="work">
        <cad-parameters></cad-parameters>
        <cad-viewport></cad-viewport>
      </main>
    `;
  }
}
